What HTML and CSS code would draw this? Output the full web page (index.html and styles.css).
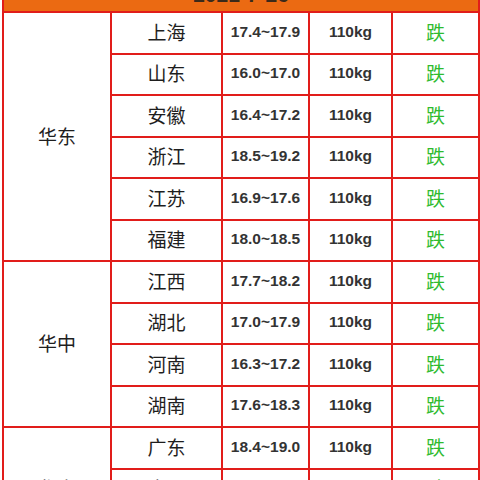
FILE: index.html
```html
<!DOCTYPE html>
<html lang="zh">
<head>
<meta charset="utf-8">
<link rel="stylesheet" href="styles.css">
</head>
<body>
<div class="page">
<table class="price">
<colgroup>
<col class="c1"><col class="c2"><col class="c3"><col class="c4"><col class="c5">
</colgroup>
<tr class="head"><td colspan="5">2021-7-26</td></tr>
<tr><td class="region" rowspan="6">华东</td><td class="prov">上海</td><td class="num">17.4~17.9</td><td class="num">110kg</td><td class="trend">跌</td></tr>
<tr><td class="prov">山东</td><td class="num">16.0~17.0</td><td class="num">110kg</td><td class="trend">跌</td></tr>
<tr><td class="prov">安徽</td><td class="num">16.4~17.2</td><td class="num">110kg</td><td class="trend">跌</td></tr>
<tr><td class="prov">浙江</td><td class="num">18.5~19.2</td><td class="num">110kg</td><td class="trend">跌</td></tr>
<tr><td class="prov">江苏</td><td class="num">16.9~17.6</td><td class="num">110kg</td><td class="trend">跌</td></tr>
<tr><td class="prov">福建</td><td class="num">18.0~18.5</td><td class="num">110kg</td><td class="trend">跌</td></tr>
<tr><td class="region" rowspan="4">华中</td><td class="prov">江西</td><td class="num">17.7~18.2</td><td class="num">110kg</td><td class="trend">跌</td></tr>
<tr><td class="prov">湖北</td><td class="num">17.0~17.9</td><td class="num">110kg</td><td class="trend">跌</td></tr>
<tr><td class="prov">河南</td><td class="num">16.3~17.2</td><td class="num">110kg</td><td class="trend">跌</td></tr>
<tr><td class="prov">湖南</td><td class="num">17.6~18.3</td><td class="num">110kg</td><td class="trend">跌</td></tr>
<tr><td class="region" rowspan="3">华南</td><td class="prov">广东</td><td class="num">18.4~19.0</td><td class="num">110kg</td><td class="trend">跌</td></tr>
<tr><td class="prov">广西</td><td class="num">17.8~18.4</td><td class="num">110kg</td><td class="trend">跌</td></tr>
<tr><td class="prov">海南</td><td class="num">18.6~19.2</td><td class="num">110kg</td><td class="trend">跌</td></tr>
</table>
</div>
</body>
</html>
```

FILE: styles.css
```css
html, body {
  margin: 0;
  padding: 0;
  background: #ffffff;
}
.page {
  width: 480px;
  height: 480px;
  overflow: hidden;
  padding: 0 2px;
  box-sizing: border-box;
}
.price {
  border-collapse: collapse;
  table-layout: fixed;
  width: 476px;
  margin-top: -36px;
  font-family: "Noto Sans CJK SC", "Noto Sans", sans-serif;
}
.c1 { width: 108px; }
.c2 { width: 111px; }
.c3 { width: 87px; }
.c4 { width: 83px; }
.c5 { width: 87px; }
.price td {
  border: 2px solid #e11d1a;
  padding: 0 0 3px 0;
  height: 36.5px;
  text-align: center;
  vertical-align: middle;
  color: #1e1e1e;
  line-height: 1;
}
.price .head td {
  background: #eb6a12;
  height: 39px;
  font-family: "Liberation Sans", Arial, sans-serif;
  font-weight: bold;
  font-size: 21px;
  color: #3a2a1a;
  vertical-align: bottom;
  padding: 0 0 6px 0;
}
.region, .prov {
  font-size: 19px;
}
.num {
  font-family: "Liberation Sans", Arial, sans-serif;
  font-weight: bold;
  font-size: 15.5px;
  color: #333 !important;
}
.trend {
  font-size: 19px;
  color: #2fbb2f !important;
}
```
